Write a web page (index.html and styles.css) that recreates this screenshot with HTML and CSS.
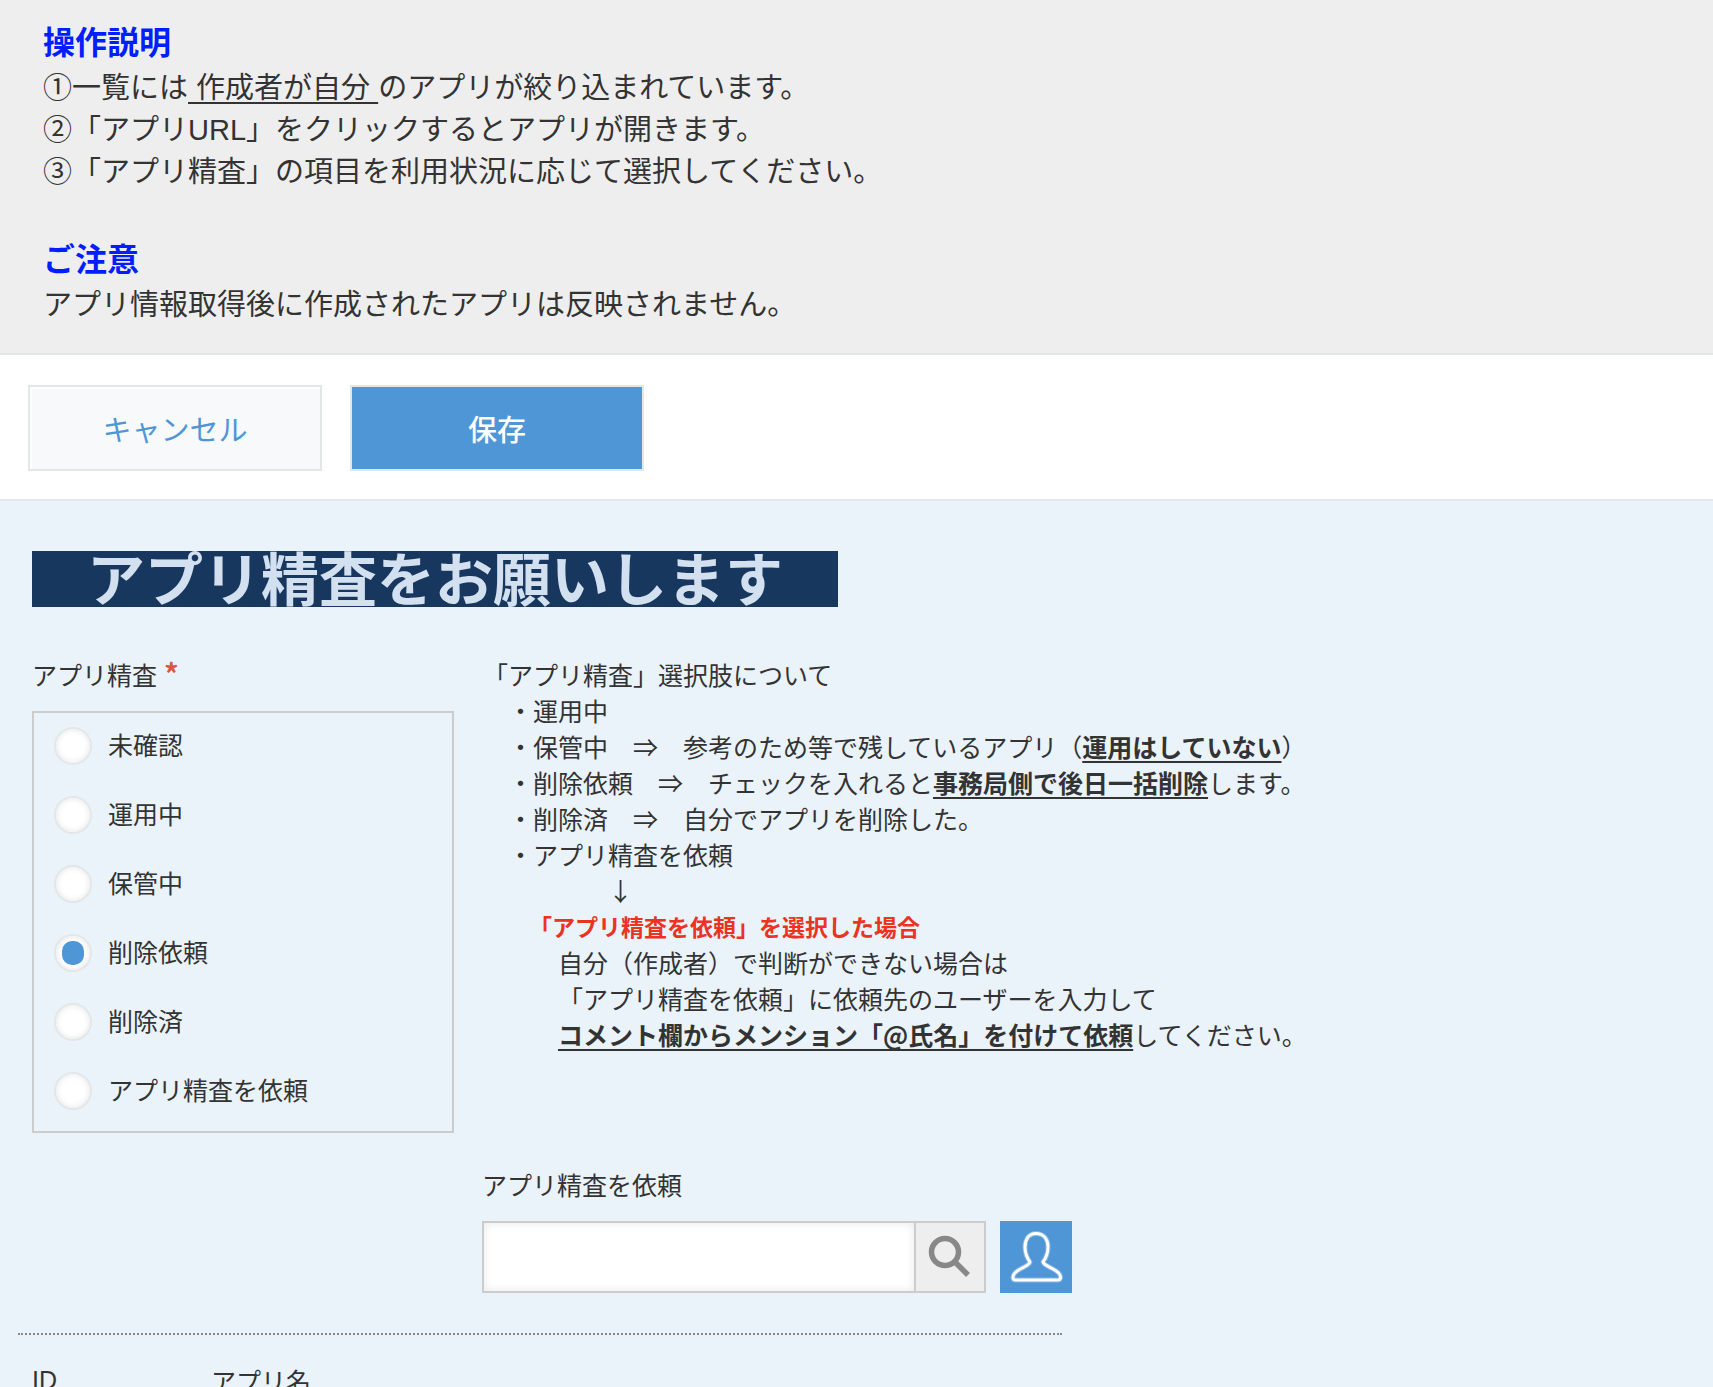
FILE: index.html
```html
<!DOCTYPE html>
<html lang="ja">
<head>
<meta charset="utf-8">
<meta name="viewport" content="width=device-width, initial-scale=1">
<title>アプリ精査</title>
<link rel="stylesheet" href="styles.css">
</head>
<body>
<header class="guide">
  <h2 class="guide-title">操作説明</h2>
  <p class="guide-text">①一覧には<u>&nbsp;作成者が自分&nbsp;</u>のアプリが絞り込まれています。</p>
  <p class="guide-text">②「アプリURL」をクリックするとアプリが開きます。</p>
  <p class="guide-text">③「アプリ精査」の項目を利用状況に応じて選択してください。</p>
  <h2 class="guide-title guide-title-next">ご注意</h2>
  <p class="guide-text">アプリ情報取得後に作成されたアプリは反映されません。</p>
</header>

<form class="record">
  <div class="toolbar">
    <button type="button" class="button button-cancel">キャンセル</button>
    <button type="submit" class="button button-save">保存</button>
  </div>

  <main class="form-body">
    <h1 class="banner">アプリ精査をお願いします</h1>

    <div class="row">
      <fieldset class="field field-radio">
        <legend class="label">アプリ精査<span class="required">*</span></legend>
        <div class="radio-box">
          <label class="radio-item"><input class="radio" type="radio" name="review">未確認</label>
          <label class="radio-item"><input class="radio" type="radio" name="review">運用中</label>
          <label class="radio-item"><input class="radio" type="radio" name="review">保管中</label>
          <label class="radio-item"><input class="radio" type="radio" name="review" checked>削除依頼</label>
          <label class="radio-item"><input class="radio" type="radio" name="review">削除済</label>
          <label class="radio-item"><input class="radio" type="radio" name="review">アプリ精査を依頼</label>
        </div>
      </fieldset>

      <div class="notes">
        <p>「アプリ精査」選択肢について</p>
        <p class="indent-1">・運用中</p>
        <p class="indent-1">・保管中　⇒　参考のため等で残しているアプリ（<b class="mark">運用はしていない</b>）</p>
        <p class="indent-1">・削除依頼　⇒　チェックを入れると<b class="mark">事務局側で後日一括削除</b>します。</p>
        <p class="indent-1">・削除済　⇒　自分でアプリを削除した。</p>
        <p class="indent-1">・アプリ精査を依頼</p>
        <p class="indent-5">↓</p>
        <p class="indent-2 alert">「アプリ精査を依頼」を選択した場合</p>
        <p class="indent-3">自分（作成者）で判断ができない場合は</p>
        <p class="indent-3">「アプリ精査を依頼」に依頼先のユーザーを入力して</p>
        <p class="indent-3"><b class="mark">コメント欄からメンション「@氏名」を付けて依頼</b>してください。</p>
      </div>
    </div>

    <div class="row row-user">
      <div class="field">
        <label class="label" for="reviewer">アプリ精査を依頼</label>
        <div class="user-select">
          <div class="search">
            <input class="search-input" id="reviewer" type="text">
            <button type="button" class="search-button" aria-label="検索">
              <svg width="68" height="68" viewBox="0 0 68 68" fill="none" stroke="#888" stroke-width="5.500">
                <circle cx="29" cy="29" r="13.500"/>
                <path d="M38.500 38.500L52 52"/>
              </svg>
            </button>
          </div>
          <button type="button" class="user-button" aria-label="ユーザーを選択">
            <svg width="72" height="72" viewBox="0 0 72 72" fill="none" stroke="#fff" stroke-linejoin="round">
              <path stroke-width="5" stroke-opacity="0.3" d="M36 12.500C29 12.500 25 18 25 26C25 33 27 37 30 41C29 46 16 47.500 13.500 54C12.500 57 13 59 15 59H58C60.500 59 61 57 60 54C57.500 47.500 44.500 46 43 41C46 37 48 33 48 26C48 18 43.500 12.500 36 12.500Z"/>
              <path stroke-width="3" d="M36 12.500C29 12.500 25 18 25 26C25 33 27 37 30 41C29 46 16 47.500 13.500 54C12.500 57 13 59 15 59H58C60.500 59 61 57 60 54C57.500 47.500 44.500 46 43 41C46 37 48 33 48 26C48 18 43.500 12.500 36 12.500Z"/>
            </svg>
          </button>
        </div>
      </div>
    </div>

    <hr class="divider">

    <div class="columns">
      <span class="column-id">ID</span>
      <span>アプリ名</span>
    </div>
  </main>
</form>
</body>
</html>
```
FILE: styles.css
```css
* {
  box-sizing: border-box;
}

body {
  height: 100vh;
  margin: 0;
  overflow: hidden;
  background: #eaf2fa;
  color: #333;
  font-family: "Noto Sans CJK JP", sans-serif;
  font-size: 25px;
  line-height: 36px;
}

p,
h1,
h2 {
  margin: 0;
}

button,
input {
  margin: 0;
  padding: 0;
  font: inherit;
}

.guide {
  padding: 19px 43px 27px;
  border-bottom: 2px solid #e3e7e8;
  background: #eee;
  font-family: "Liberation Sans", "Noto Sans CJK JP", sans-serif;
}

.guide-title {
  color: #001eff;
  font-size: 32px;
  line-height: 48px;
}

.guide-title-next {
  margin-top: 43px;
}

.guide-text {
  font-size: 29px;
  line-height: 42px;
}

u,
.mark {
  text-decoration: underline;
  text-decoration-thickness: 2px;
  text-underline-offset: 4px;
  text-decoration-skip-ink: none;
}

.toolbar {
  display: flex;
  gap: 28px;
  padding: 30px 28px 28px;
  border-bottom: 2px solid #e3e7e8;
  background: #fff;
}

.button {
  width: 294px;
  height: 86px;
  border: 2px solid #e3e7e8;
  font-size: 29px;
}

.button-cancel {
  background: #f7f9fa;
  box-shadow: inset 2px 2px 1px #fff;
  color: #4f96d6;
}

.button-save {
  background: #4f96d6;
  color: #fff;
  font-weight: 500;
}

.form-body {
  padding: 50px 18px 0;
}

.banner {
  width: fit-content;
  margin: 0 14px 49px;
  padding: 0 55px 6px;
  background: #18375f;
  color: #d3e0f0;
  font-size: 58px;
  line-height: 50px;
}

.row {
  display: flex;
  gap: 29px;
  padding: 0 14px;
}

.row-user {
  margin-top: 33px;
  padding-left: 464px;
}

.field {
  margin: 0;
  padding: 0;
  border: 0;
}

.field-radio {
  width: 422px;
}

.label {
  display: block;
  margin-bottom: 19px;
  padding: 0;
}

.required {
  margin-left: 7px;
  color: #dd5544;
  font-size: 29px;
  font-weight: bold;
  line-height: 1;
}

.radio-box {
  display: flex;
  flex-direction: column;
  gap: 31px;
  padding: 14px 20px 21px;
  border: 2px solid #ccc;
}

.radio-item {
  display: flex;
  align-items: flex-start;
  gap: 16px;
  height: 38px;
  line-height: 34px;
}

.radio {
  display: grid;
  place-items: center;
  width: 38px;
  height: 38px;
  appearance: none;
  border: 2px solid #e3e7e8;
  border-radius: 50%;
  background: #fff;
  box-shadow: inset 0 0 6px #e4e4e4;
}

.radio:checked::before {
  width: 22px;
  height: 24px;
  border-radius: 10px;
  background: #4f96d6;
  content: "";
}

.indent-1 {
  padding-left: 1em;
}

.indent-2 {
  padding-left: 2em;
}

.indent-3 {
  padding-left: 3em;
}

.indent-5 {
  padding-left: 5em;
}

.alert {
  color: #eb3323;
  font-size: 23px;
  font-weight: bold;
}

.user-select {
  display: flex;
  gap: 14px;
}

.search {
  display: flex;
  width: 504px;
  height: 72px;
  border: 2px solid #ccc;
}

.search-input {
  flex: 1;
  min-width: 0;
  padding: 0 12px;
  border: 0;
  background: #fff;
  box-shadow: inset 0 0 10px #e8e8e8;
}

.search-button {
  width: 70px;
  border: 0;
  border-left: 2px solid #ccc;
  background: #eee;
}

.user-button {
  width: 72px;
  height: 72px;
  border: 0;
  background: #4f96d6;
}

.search-button svg,
.user-button svg {
  display: block;
}

.divider {
  width: 1044px;
  margin: 40px 0 27px;
  border: 0;
  border-top: 2px dotted #888;
}

.columns {
  display: flex;
  padding: 0 14px;
}

.column-id {
  width: 179px;
  font-family: "Liberation Sans", sans-serif;
}
```
